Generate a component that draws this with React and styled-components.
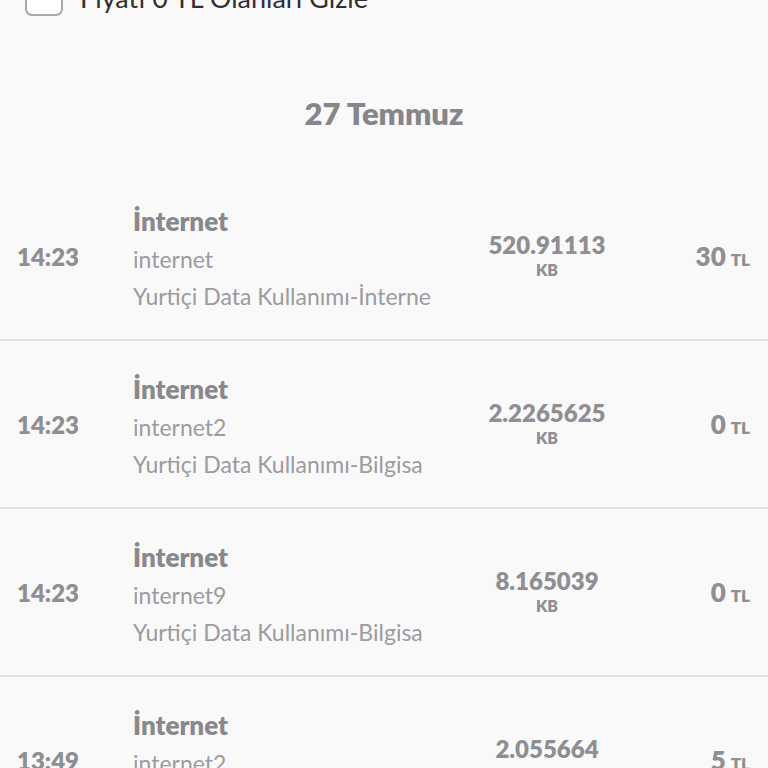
import styled, { createGlobalStyle } from 'styled-components'

const GlobalStyle = createGlobalStyle`
  body {
    margin: 0;
    background: #f9f9fa;
    font-family: Lato, "Open Sans", sans-serif;
  }
`

const Page = styled.div`
  background: #f9f9fa;
  min-height: 768px;
  overflow: hidden;
`

const FilterRow = styled.label`
  display: flex;
  align-items: center;
  gap: 17px;
  margin-top: -22px;
  padding-left: 25px;
  height: 38px;
  font-size: 27px;
  color: #2f2f33;
`

const Checkbox = styled.span`
  width: 34px;
  height: 34px;
  border: 2px solid #a9a9ad;
  border-radius: 7px;
  background: #fff;
`

const DateHeader = styled.h2`
  margin: 80px 0 43px;
  text-align: center;
  font-size: 31px;
  line-height: 34px;
  font-weight: 800;
  color: #86868b;
`

const Row = styled.div`
  display: grid;
  grid-template-columns: 116px 1fr 134px 136px;
  align-items: center;
  height: 166px;
  padding: 0 18px 0 17px;
  border-bottom: 2px solid #e2e2e4;
`

const Time = styled.div`
  font-size: 24px;
  font-weight: 800;
  color: #8e8e93;
`

const Details = styled.div`
  padding-top: 4px;
  white-space: nowrap;
  overflow: hidden;
`

const Title = styled.div`
  font-size: 26px;
  line-height: 38px;
  font-weight: 800;
  color: #88888d;
`

const Sub = styled.div`
  font-size: 23px;
  line-height: 38px;
  color: #9b9ba0;

  & + & {
    line-height: 37px;
  }
`

const Usage = styled.div`
  text-align: center;
  color: #8e8e93;
  font-weight: 800;
`

const Amount = styled.div`
  font-size: 24px;
  line-height: 28px;
`

const Unit = styled.div`
  font-size: 16px;
  line-height: 22px;
`

const Price = styled.div`
  text-align: right;
  font-size: 26px;
  font-weight: 800;
  color: #8e8e93;

  small {
    font-size: 17px;
    margin-left: 5px;
  }
`

const records = [
  { time: '14:23', name: 'internet', desc: 'Yurtiçi Data Kullanımı-İnterne', amount: '520.91113', price: '30' },
  { time: '14:23', name: 'internet2', desc: 'Yurtiçi Data Kullanımı-Bilgisa', amount: '2.2265625', price: '0' },
  { time: '14:23', name: 'internet9', desc: 'Yurtiçi Data Kullanımı-Bilgisa', amount: '8.165039', price: '0' },
  { time: '13:49', name: 'internet2', desc: 'Yurtiçi Data Kullanımı-Bilgisa', amount: '2.055664', price: '5' },
]

const App = () => {
  return (
    <Page>
      <GlobalStyle />
      <FilterRow>
        <Checkbox />
        Fiyatı 0 TL Olanları Gizle
      </FilterRow>
      <DateHeader>27 Temmuz</DateHeader>
      {records.map((r, index) => (
        <Row key={`rec-${index}`}>
          <Time>{r.time}</Time>
          <Details>
            <Title>İnternet</Title>
            <Sub>{r.name}</Sub>
            <Sub>{r.desc}</Sub>
          </Details>
          <Usage>
            <Amount>{r.amount}</Amount>
            <Unit>KB</Unit>
          </Usage>
          <Price>{r.price}<small>TL</small></Price>
        </Row>
      ))}
    </Page>
  )
}

export default App
